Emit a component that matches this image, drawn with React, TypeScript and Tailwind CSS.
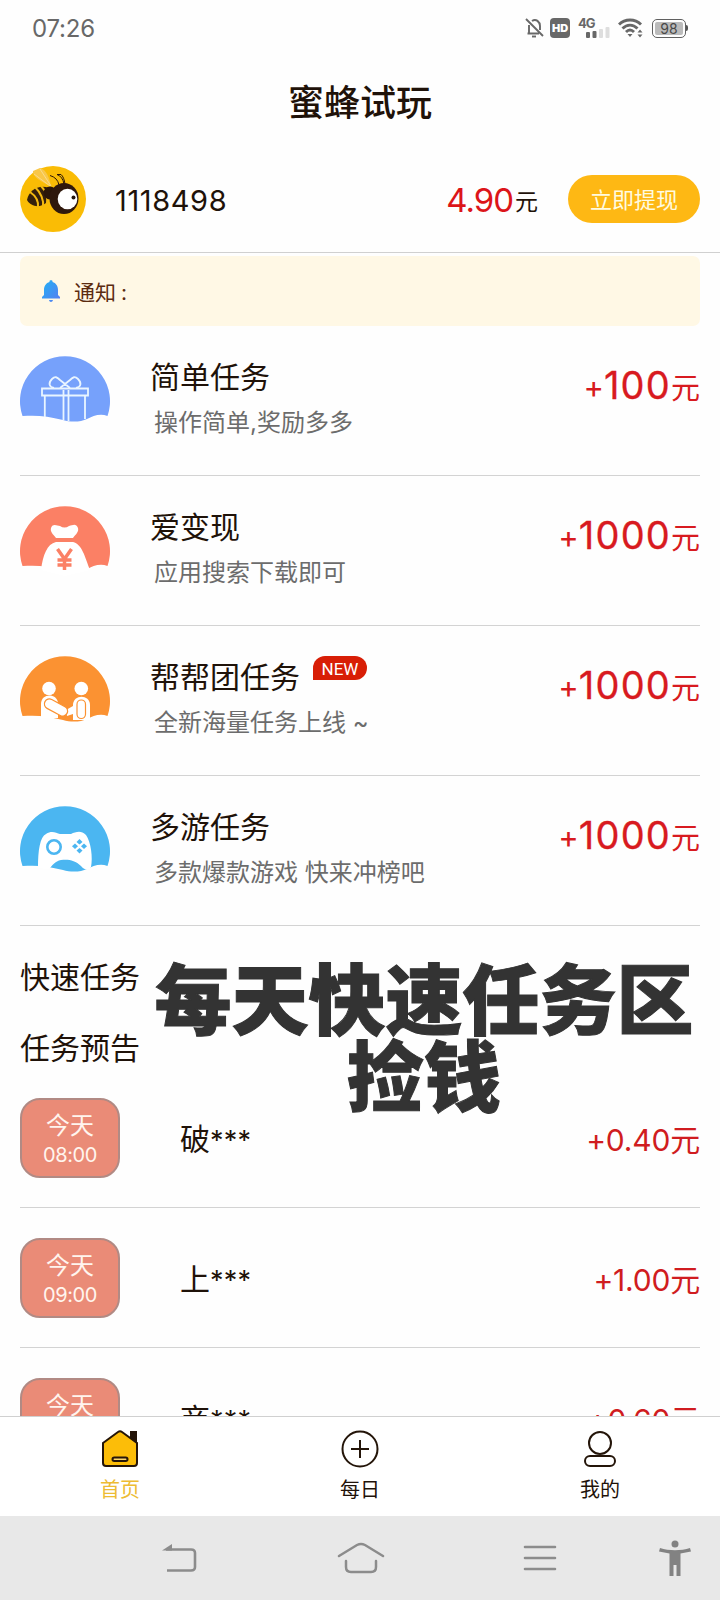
import type { ReactNode } from "react";

function BeeAvatar() {
  return (
    <svg width="66" height="66" viewBox="0 0 66 66">
      <circle cx="33" cy="33" r="33" fill="#fabc05" />
      <path d="M30 20C22 16 12 11 13 5L20 2C27 4 29 12 31 20Z" fill="#f9c748" />
      <path d="M31 20L20 3M30 20L14 8" stroke="#fadb8a" strokeWidth="1" fill="none" />
      <path d="M39 19C38 14 35 11 30 9.500M44 18C43 13 41 10 37 8.500L41 8.500C43 10 44.500 14 45 18" stroke="#2b1608" strokeWidth="1" fill="none" />
      <path d="M29 22C20 18 9 23 7 34C11 41 20 42 26 37L30 30Z" fill="#35200b" />
      <path d="M21 20C26 25 28 31 27 38M15 21C21 27 24 33 23 41M10 26C16 30 19 35 18 42" stroke="#f3b90f" strokeWidth="2" fill="none" />
      <ellipse cx="30" cy="27" rx="6.500" ry="6.500" fill="#2b1608" />
      <ellipse cx="44" cy="32.500" rx="14.500" ry="15.500" fill="#2f180c" />
      <ellipse cx="47.500" cy="33" rx="9.800" ry="10.300" fill="#fff" />
      <circle cx="53.500" cy="31.500" r="2" fill="#20130c" />
    </svg>
  );
}

function Wave({ color, children }: { color: string; children: ReactNode }) {
  return (
    <svg width="90" height="90" viewBox="0 0 90 90" className="shrink-0">
      <path d="M2.500 60A45 45 0 1 1 87.500 60C80 57 73 60 67 63C61 66 51 66.500 43 64C28 60 17 59 2.500 60Z" fill={color} />
      {children}
    </svg>
  );
}

function GiftIcon() {
  return (
    <Wave color="#76a1fb">
      <g fill="none" stroke="#e9f5ff" strokeWidth="1.8">
        <path d="M22 32.500H68V39.500H22ZM24.800 40V61M65 40V63M43.500 34V64M48.500 34V65" />
        <path d="M45 28L50 24C53 21 55 20 58 23C62 27 61 31 56 32M45 28L40 24C37 21 35 20 32 23C28 27 29 31 34 32M45 28L40 32M45 28L50 32" />
      </g>
    </Wave>
  );
}

function MoneyBagIcon() {
  return (
    <Wave color="#fb8065">
      <path d="M36 32C33 28 30 26 31 22C33 17 37 20 40 20C43 22 46 22 49 20C53 19 56 17 58 22C59 26 56 28 53 32Z" fill="#fff" />
      <path d="M21 64C23 49 27 38 36 36H53C62 38 65 51 70 64L45 70Z" fill="#fff" />
      <path d="M37.500 43L44.500 53L51.500 43M44.500 52V64M37.500 54H51.500M37.500 59H51.500" stroke="#fb8065" strokeWidth="3.500" fill="none" />
    </Wave>
  );
}

function HandshakeIcon() {
  return (
    <Wave color="#fb9232">
      <circle cx="29" cy="32.500" r="6.800" fill="#fff" />
      <circle cx="61.300" cy="32.500" r="6.800" fill="#fff" />
      <path d="M21 62V48C21 37 37 37 38 47V62Z" fill="#fff" />
      <path d="M38 56L48 60L46 62L38 60Z" fill="#fb9232" />
      <path d="M53 64V49C53 38 70 38 70 49V64Z" fill="#fff" />
      <path d="M53 50L46 54L47 60L53 58" fill="#fff" />
      <rect x="23.500" y="46.500" width="25" height="10" rx="5" transform="rotate(28 36 51.500)" fill="#fff" stroke="#fb9232" strokeWidth="1.200" />
      <rect x="57" y="44" width="8.500" height="18.500" rx="4.200" fill="#fff" stroke="#fb9232" strokeWidth="1.200" />
    </Wave>
  );
}

function GamepadIcon() {
  return (
    <Wave color="#4bb6f1">
      <path d="M18 62C18 44 20 31 26 28C32 24 36 27 40 28H51C56 26 61 24 66 29C71 36 73 52 71 61C68 65 64 64 61 60C55 54 48 53 41 54C35 55 32 60 29 63Z" fill="#fff" />
      <circle cx="34" cy="41" r="6.700" fill="none" stroke="#4bb6f1" strokeWidth="2.600" />
      <g fill="#4bb6f1">
        <path d="M59.500 33L62.500 36L59.500 38.500L56.500 36Z" />
        <path d="M59.500 42L62.500 44.500L59.500 47.500L56.500 44.500Z" />
        <path d="M55 37.500L58 40.300L55 43L52 40.300Z" />
        <path d="M64 37.500L67 40.300L64 43L61 40.300Z" />
      </g>
    </Wave>
  );
}

const tasks = [
  { icon: GiftIcon, title: "简单任务", desc: "操作简单,奖励多多", amount: "100" },
  { icon: MoneyBagIcon, title: "爱变现", desc: "应用搜索下载即可", amount: "1000" },
  { icon: HandshakeIcon, title: "帮帮团任务", desc: "全新海量任务上线 ~", amount: "1000", isNew: true },
  { icon: GamepadIcon, title: "多游任务", desc: "多款爆款游戏 快来冲榜吧", amount: "1000" },
];

const previews = [
  { time: "08:00", name: "破", amount: "+0.40" },
  { time: "09:00", name: "上", amount: "+1.00" },
  { time: "10:00", name: "商", amount: "+0.60" },
];

function StatusBar() {
  return (
    <div className="flex h-14 shrink-0 items-center justify-between px-8 text-[#686868]">
      <span className="pt-[2px] text-[24px] leading-none tracking-[-0.2px]">07:26</span>
      <div className="flex items-center">
        <svg width="19" height="20" viewBox="0 0 19 20" fill="none" stroke="#686868" strokeWidth="1.900" className="mr-[6px]">
          <path d="M1 1L18 18M2.500 15.500H14M4 15V7M7 3C11 0 15 4 15 8V12" />
          <path d="M7 18.500H11" />
        </svg>
        <span className="mr-2 flex h-5 w-5 items-center justify-center rounded-[4px] bg-[#686868] text-[11px] font-black leading-none text-white">
          HD
        </span>
        <div className="mr-[9px] flex h-5 w-[31px] flex-col">
          <span className="text-[13px] font-bold leading-[10px] tracking-[-1px]">4G</span>
          <svg width="24" height="11" viewBox="0 0 24 11" className="-mt-[1px] ml-2 shrink-0">
            <rect x="0" y="5" width="4" height="6" rx="1" fill="#686868" />
            <rect x="6.500" y="4" width="4" height="7" rx="1" fill="#686868" />
            <rect x="13" y="2" width="4" height="9" rx="1" fill="#dedede" />
            <rect x="19.500" y="0" width="4" height="11" rx="1" fill="#dedede" />
          </svg>
        </div>
        <svg width="25" height="20" viewBox="0 0 25 20" fill="none" stroke="#686868" className="mr-[9px]">
          <path d="M1 6.500C7 0.500 17 0.500 23 6.500M4.500 10.500C9 6 15 6 19.500 10.500M8 14C10.500 11.500 13.500 11.500 16 14" strokeWidth="2.900" />
          <path d="M9.500 16L12 19L14.500 16ZM19.500 14.500L22 11.500L24.500 14.500ZM19.500 16.500L22 19.500L24.500 16.500Z" fill="#686868" stroke="none" />
        </svg>
        <span className="flex h-[19px] w-[34px] rounded-[5px] border-[1.5px] border-[#606060] p-[2px]">
          <span className="flex flex-1 items-center justify-center rounded-[2px] bg-[#bbb] pt-[1px] text-[14px] leading-none text-[#484848]">
            98
          </span>
        </span>
        <span className="h-[6px] w-[2px] rounded-r bg-[#555]" />
      </div>
    </div>
  );
}

export default function App() {
  return (
    <div className="flex h-[1600px] w-[720px] flex-col overflow-hidden bg-[#fefefe] font-[Inter,'Noto_Sans_CJK_SC',sans-serif] text-[#1f1209]">
      <StatusBar />

      <h1 className="flex h-[94px] shrink-0 items-center justify-center text-[36px] font-medium leading-none">
        蜜蜂试玩
      </h1>

      {/* Account */}
      <div className="flex h-[103px] shrink-0 items-center border-b border-[#d0d0d0] px-5 pb-[5px]">
        <BeeAvatar />
        <span className="ml-[29px] pt-[4px] text-[29px] leading-none tracking-[0.6px]">1118498</span>
        <div className="ml-auto flex items-baseline pt-[3px] leading-none">
          <span className="text-[33px] tracking-[-1px] text-[#dc1519]">4.90</span>
          <span className="relative -top-[2px] ml-[2px] text-[23px]">元</span>
        </div>
        <button className="ml-[30px] h-12 w-[132px] rounded-full bg-[#feb814] pt-[2px] text-[22px] leading-none text-[#fffbe0]">
          立即提现
        </button>
      </div>

      <main className="min-h-0 flex-1 overflow-hidden px-5 pt-[3px]">
        {/* Notice */}
        <div className="flex h-[70px] items-center rounded-[7px] bg-[#fff8e5] pl-[21px] text-[21px] leading-none text-[#5b2b10]">
          <svg width="20" height="22" viewBox="0 0 20 22">
            <defs>
              <linearGradient id="bell" x1="0" y1="0" x2="1" y2="1">
                <stop offset="0" stopColor="#1fb2f5" />
                <stop offset="1" stopColor="#5b7af0" />
              </linearGradient>
            </defs>
            <path d="M8.500 2V1C8.500 0 11.500 0 11.500 1V2C15 3 17 6 17 10V15L19 17V18.500H1V17L3 15V10C3 6 5 3 8.500 2ZM8 20H12C11.500 22.500 8.500 22.500 8 20Z" fill="url(#bell)" />
          </svg>
          <span className="ml-[13px] pt-[3px]">
            通知<span className="ml-[5px]">:</span>
          </span>
        </div>

        {/* Task list */}
        {tasks.map((task) => (
          <div key={task.title} className="flex h-[150px] items-start border-b border-[#d3d3d3] pt-[30px]">
            <task.icon />
            <div className="ml-10 flex flex-col">
              <div className="flex items-start">
                <span className="pt-[6px] text-[30px] leading-[30px]">{task.title}</span>
                {task.isNew && (
                  <span className="ml-[13px] flex h-6 w-[54px] items-center justify-center rounded-xl rounded-bl-none bg-[#d81e06] pt-[2px] font-[Roboto] text-[17px] leading-none text-white">
                    NEW
                  </span>
                )}
              </div>
              <span className="ml-[4px] mt-[19px] text-[24px] leading-[24px] text-[#6c6c6c]">{task.desc}</span>
            </div>
            <div className="ml-auto flex items-baseline pt-[10px] leading-[38px] text-[#d81a20]">
              <span className="relative -top-[1px] text-[31px]">+</span>
              <span className="text-[38px] tracking-[1.2px] [-webkit-text-stroke:0.3px_#d81a20]">{task.amount}</span>
              <span className="text-[29px]">元</span>
            </div>
          </div>
        ))}

        {/* Quick tasks */}
        <div className="relative h-[142px] pt-9 text-[30px] leading-[30px]">
          <h2>快速任务</h2>
          <h2 className="mt-[41px]">任务预告</h2>
          <p className="absolute left-[131px] top-[37px] w-[546px] text-center text-[77px] font-black leading-[77px] text-[#333] [-webkit-text-stroke:1px_#333]">
            每天快速任务区捡钱
          </p>
        </div>
        {previews.map((item) => (
          <div key={item.time} className="flex h-[140px] items-center border-b border-[#d3d3d3]">
            <div className="flex h-20 w-[100px] flex-col items-center justify-center rounded-[20px] border-2 border-[#b18a84] bg-[#ea8b77] pt-[5px] text-[#fff5ee]">
              <span className="text-[24px] leading-[30px]">今天</span>
              <span className="text-[20px] leading-[28px] tracking-[-0.4px]">{item.time}</span>
            </div>
            <span className="ml-[60px] pt-[3px] text-[30px] leading-none">
              {item.name}
              <span className="text-[27px] tracking-[0.2px]">***</span>
            </span>
            <span className="ml-auto pt-[4px] text-[30px] leading-none tracking-[-0.2px] text-[#d01c20]">{item.amount}元</span>
          </div>
        ))}
      </main>

      {/* Tab bar */}
      <nav className="grid h-[100px] shrink-0 grid-cols-3 border-t border-[#d0d0d0] bg-white text-[20px] leading-none">
        <div className="flex flex-col items-center pt-[13px] text-[#edbc33]">
          <svg width="38" height="38" viewBox="0 0 38 38" stroke="#241509" strokeWidth="2">
            <path d="M30 2H35V16L30 11Z" fill="#241509" />
            <path d="M2 13L17 2Q19 0.500 21 2L36 13V33Q36 36 33 36H5Q2 36 2 33Z" fill="#fcbd08" />
            <rect x="11.500" y="27.500" width="15" height="3.500" rx="1.750" fill="#fcd76b" />
          </svg>
          <span className="mt-[12px]">首页</span>
        </div>
        <div className="flex flex-col items-center pt-[13px]">
          <svg width="38" height="38" viewBox="0 0 38 38" fill="none" stroke="#241509" strokeWidth="2">
            <circle cx="19" cy="19" r="17.500" />
            <path d="M19 10V28M10 19H28" />
          </svg>
          <span className="mt-[12px]">每日</span>
        </div>
        <div className="flex flex-col items-center pt-[13px]">
          <svg width="38" height="38" viewBox="0 0 38 38" fill="none" stroke="#241509" strokeWidth="2">
            <circle cx="19" cy="13" r="11" />
            <rect x="4" y="26" width="30" height="10" rx="5" />
          </svg>
          <span className="mt-[12px]">我的</span>
        </div>
      </nav>

      {/* System navigation */}
      <div className="flex h-[84px] shrink-0 items-center bg-[#e8e8e8] pl-[162px] pr-[29px]">
        <svg width="36" height="30" viewBox="0 0 36 30" fill="none" stroke="#8c8c8c" strokeWidth="2.600">
          <path d="M4 6.500H29Q33 6.500 33 10V24Q33 27.500 29 27.500H5" />
          <path d="M0 7.500L10 1V7.500Z" fill="#8c8c8c" stroke="none" />
        </svg>
        <svg width="48" height="32" viewBox="0 0 48 32" fill="none" stroke="#8c8c8c" strokeWidth="2.500" strokeLinecap="round" className="ml-[139px]">
          <path d="M2 14L20 3Q24 1 28 3L46 14M9 19V25Q9 30 14 30H34Q39 30 39 25V19" />
        </svg>
        <svg width="34" height="28" viewBox="0 0 34 28" stroke="#8c8c8c" strokeWidth="2.600" strokeLinecap="round" className="ml-[138px]">
          <path d="M2 3H32M2 14H32M2 25H32" />
        </svg>
        <svg width="32" height="36" viewBox="0 0 32 36" fill="#828282" className="ml-auto">
          <circle cx="16" cy="4" r="3.500" />
          <path d="M1 8C10 11 22 11 31 8L32 11.500L21.500 13.500V36H17.500V25H14.500V36H10.500V13.500L0 11.500Z" />
        </svg>
      </div>
    </div>
  );
}
